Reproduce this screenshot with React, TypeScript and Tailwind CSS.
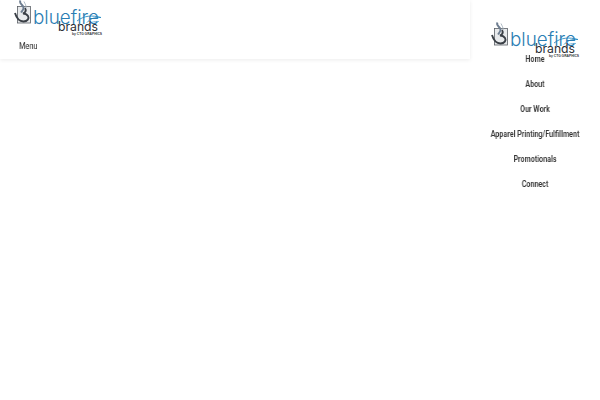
const links = ["Home", "About", "Our Work", "Apparel Printing/Fulfillment", "Promotionals", "Connect"];

const Logo = () => (
  <svg width="89" height="35" viewBox="0 0 89 35" className="block shrink-0 overflow-visible">
    {/* square mark with the flame */}
    <rect x="4.500" y="6.500" width="13" height="16.500" fill="#e8eaec" stroke="#5b6066" strokeWidth="0.800" />
    <path d="M2 13c1.500 5 4.500 8.500 8.500 8.500 4 0 6-3 4.500-5.500-1-1.500-3-2.500-5-2.500 2.500-1 3.500-3 2-5.500" fill="none" stroke="#3a3f46" strokeWidth="1.900" />
    <path d="M7.500 .5c-2 3 2.500 4 3 7 .3 2-1 3-2.500 5" fill="none" stroke="#6d7d90" strokeWidth="1.900" />
    <path d="M11 1.500c1 2.500 2.500 4 2 6.500" fill="none" stroke="#a5b1bc" strokeWidth="0.900" />
    {/* swoosh across the last letters */}
    <path d="M64 21c7-5.500 15-6 24-3.500-7-.5-11 1.500-14 5" fill="none" stroke="#2b8cc4" strokeWidth="0.900" />
    <path d="M73 26c4-3.500 8-5 13-4.500" fill="none" stroke="#5aa9d6" strokeWidth="0.800" />
    <text x="20" y="23.500" fontFamily="Inter, sans-serif" fontSize="18.500" fontWeight="300" fill="#2a7db3" textLength="66" lengthAdjust="spacingAndGlyphs">bluefire</text>
    <text x="45" y="31" fontFamily="Inter, sans-serif" fontSize="12.500" fontWeight="400" fill="#2c3036" textLength="40" lengthAdjust="spacingAndGlyphs">brands</text>
    <text x="59" y="34.700" fontFamily="Liberation Sans, sans-serif" fontSize="3" fontWeight="700" fill="#33363b" textLength="30" lengthAdjust="spacingAndGlyphs">by CTG GRAPHICS</text>
  </svg>
);

export default function App() {
  return (
    <div className="flex w-[600px] h-[400px] bg-white overflow-hidden font-['Roboto',sans-serif]">
      <div className="w-[470px] shrink-0">
        <header className="h-[59px] flex flex-col shadow-[0_1px_4px_rgba(0,0,0,0.08)]">
          <div className="pl-[13px]">
            <Logo />
          </div>
          <span className="ml-[19px] mt-[6px] text-[9px] leading-[10px] text-[#222] origin-left scale-x-[0.82] [will-change:transform]">Menu</span>
        </header>
      </div>
      <aside className="w-[130px] shrink-0 flex flex-col items-center pt-[22px]">
        <div className="-ml-[1px]">
          <Logo />
        </div>
        <nav className="w-full flex flex-col -mt-[10px]">
          {links.map((label) => (
            <a key={label} className="h-[25px] flex items-center justify-center text-[8.5px] font-semibold text-[#333] whitespace-nowrap scale-x-[0.84] [will-change:transform]">
              {label}
            </a>
          ))}
        </nav>
      </aside>
    </div>
  );
}
